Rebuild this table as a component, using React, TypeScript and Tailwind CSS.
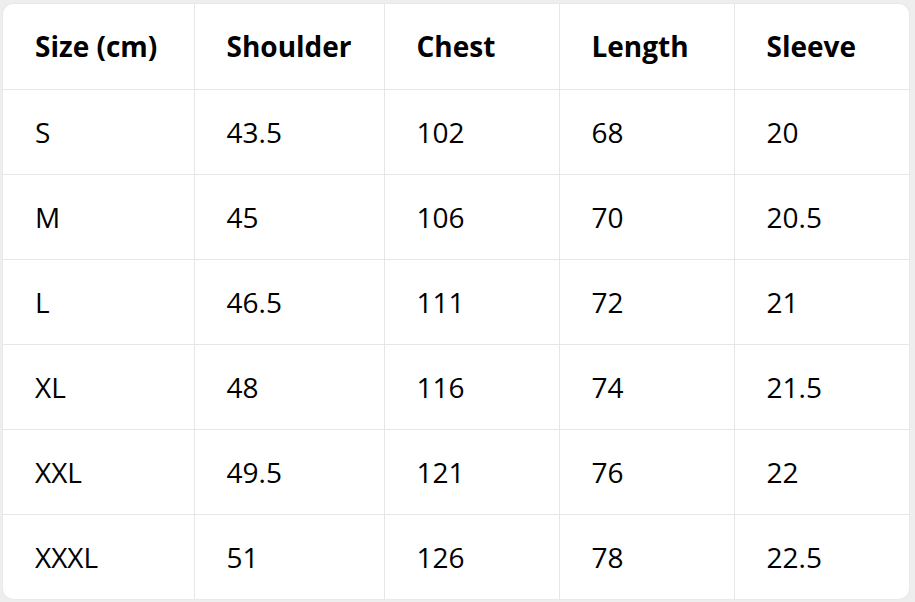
import React from "react";

const headers = ["Size (cm)", "Shoulder", "Chest", "Length", "Sleeve"];
const rows = [
  ["S", "43.5", "102", "68", "20"],
  ["M", "45", "106", "70", "20.5"],
  ["L", "46.5", "111", "72", "21"],
  ["XL", "48", "116", "74", "21.5"],
  ["XXL", "49.5", "121", "76", "22"],
  ["XXXL", "51", "126", "78", "22.5"],
];
const widths = ["w-[191px]", "w-[190px]", "w-[175px]", "w-[175px]", "w-[175px]"];

export default function App() {
  return (
    <div
      className="w-[915px] h-[602px] bg-[#eeeeee] pt-[4px] pl-[3px]"
      style={{ fontFamily: '"Open Sans", "Noto Sans", sans-serif' }}
    >
      <div className="w-[906px] h-[595px] bg-white rounded-[10px] overflow-hidden shadow-[0_0_2px_rgba(0,0,0,0.08)]">
        <table className="border-collapse table-fixed w-full text-black">
          <thead>
            <tr className="h-[85px]">
              {headers.map((h, i) => (
                <th
                  key={h}
                  className={`${widths[i]} text-left font-bold text-[28px] pl-[32px] border-b border-[#e6e6e6] ${i > 0 ? "border-l" : ""}`}
                >
                  {h}
                </th>
              ))}
            </tr>
          </thead>
          <tbody>
            {rows.map((r, ri) => (
              <tr key={ri} className="h-[85px]">
                {r.map((c, i) => (
                  <td
                    key={i}
                    className={`text-[28px] pl-[32px] border-[#e6e6e6] ${ri < rows.length - 1 ? "border-b" : ""} ${i > 0 ? "border-l" : ""}`}
                  >
                    {c}
                  </td>
                ))}
              </tr>
            ))}
          </tbody>
        </table>
      </div>
    </div>
  );
}
